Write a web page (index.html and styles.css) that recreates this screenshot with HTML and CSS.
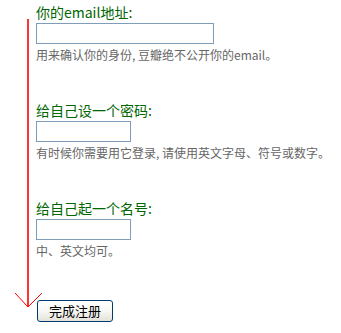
FILE: index.html
```html
<!DOCTYPE html>
<html lang="zh-CN">
<head>
<meta charset="utf-8">
<title>注册</title>
<link rel="stylesheet" href="styles.css">
</head>
<body>
<form class="reg-form">
  <div class="field">
    <label class="field-label">你的email地址:</label>
    <input class="text-input wide" type="text">
    <p class="hint">用来确认你的身份, 豆瓣绝不公开你的email。</p>
  </div>
  <div class="field">
    <label class="field-label">给自己设一个密码:</label>
    <input class="text-input narrow" type="password">
    <p class="hint">有时候你需要用它登录, 请使用英文字母、符号或数字。</p>
  </div>
  <div class="field">
    <label class="field-label">给自己起一个名号:</label>
    <input class="text-input narrow" type="text">
    <p class="hint">中、英文均可。</p>
  </div>
  <div class="actions">
    <button class="submit-btn" type="button">完成注册</button>
  </div>
</form>
<svg class="arrow" width="341" height="333" viewBox="0 0 341 333">
  <line x1="28" y1="19" x2="28" y2="307" stroke="#ff0000" stroke-width="1.6"/>
  <polyline points="15,293 28,307 42,293" fill="none" stroke="#ff0000" stroke-width="1"/>
</svg>
</body>
</html>
```

FILE: styles.css
```css
html, body {
  margin: 0;
  padding: 0;
  background: #ffffff;
}

body {
  position: relative;
  width: 341px;
  height: 333px;
  overflow: hidden;
  font-family: "Noto Sans CJK SC", "Noto Sans", sans-serif;
}

.reg-form {
  display: flex;
  flex-direction: column;
  gap: 38px;
  padding: 3px 0 0 36px;
  margin: 0;
}

.field {
  display: flex;
  flex-direction: column;
  align-items: flex-start;
}

.field-label {
  display: block;
  font-size: 14px;
  line-height: 18px;
  height: 18px;
  color: #006600;
}

.text-input {
  box-sizing: border-box;
  height: 21px;
  margin: 2px 0 0 0;
  padding: 0 2px;
  border: 1px solid #7f9db9;
  background: #ffffff;
  font-size: 13px;
  outline: none;
}

.text-input.wide {
  width: 178px;
}

.text-input.narrow {
  width: 95px;
}

.hint {
  margin: 3px 0 0 0;
  font-size: 12px;
  line-height: 16px;
  color: #666666;
  white-space: nowrap;
}

.actions {
  display: flex;
  margin-top: 3px;
  padding-left: 1px;
}

.submit-btn {
  box-sizing: border-box;
  width: 76px;
  height: 22px;
  padding: 0;
  border: 1px solid #003c74;
  border-radius: 3px;
  background: linear-gradient(#ffffff 0%, #f7f7f4 50%, #e4e2d8 100%);
  font-family: "Noto Sans CJK SC", sans-serif;
  font-size: 13px;
  line-height: 20px;
  color: #000000;
}

.arrow {
  position: absolute;
  left: 0;
  top: 0;
  pointer-events: none;
}
```
